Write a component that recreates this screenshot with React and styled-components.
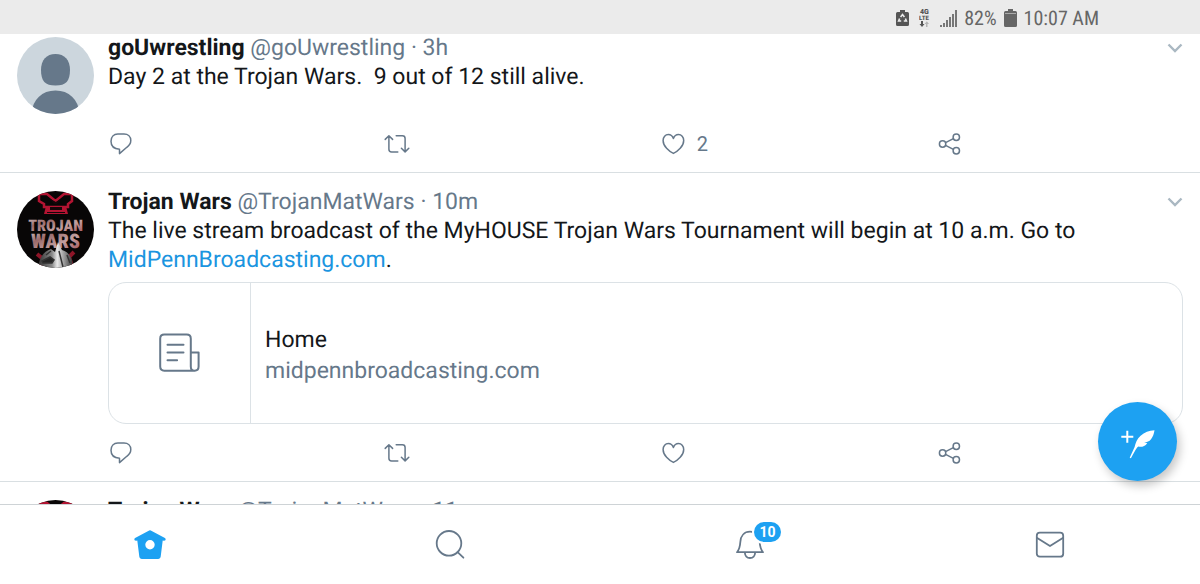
import React from "react";
import styled, { createGlobalStyle } from "styled-components";

const GlobalStyle = createGlobalStyle`
  * { box-sizing: border-box; }
  body { margin: 0; background: #fff; text-rendering: geometricPrecision; }
  button { font: inherit; color: inherit; background: none; border: 0; padding: 0; cursor: pointer; }
  svg { display: block; flex: none; }
`;

const slate = "#66788a";
const blue = "#1da1f2";

const Screen = styled.div`
  position: relative;
  display: flex;
  flex-direction: column;
  height: 100vh;
  overflow: hidden;
  font-family: Roboto, "Liberation Sans", sans-serif;
  color: #14171a;
`;

const StatusBar = styled.header`
  flex: none;
  display: flex;
  align-items: center;
  justify-content: flex-end;
  gap: 7px;
  height: 34px;
  padding: 2px 101px 0 17px;
  background: #ebebeb;
  color: #666;
  font-family: "Roboto Condensed", Roboto, sans-serif;
  font-size: 20px;
  line-height: 24px;
`;

const StatusIcons = styled.div`
  display: flex;
  align-items: center;
  gap: 10px;
`;

const Feed = styled.main`
  flex: 1;
  min-height: 0;
  overflow: hidden;
`;

const TweetBox = styled.article`
  display: flex;
  gap: 14px;
  padding: ${(p) => (p.$scrolled ? 0 : 15)}px 17px 0;
  border-bottom: 1px solid #d9dfe2;
`;

const Avatar = styled.div`
  flex: none;
  width: 77px;
  height: 77px;
  margin: 3px 0 1px;
  border-radius: 50%;
  overflow: hidden;
`;

const TweetMain = styled.div`
  flex: 1;
  min-width: 0;
`;

const Content = styled.div`
  min-height: 81px;
`;

const TweetHeader = styled.div`
  display: flex;
  justify-content: space-between;
  height: 28px;
  font-size: 23px;
  line-height: 27px;
  white-space: nowrap;
  color: ${slate};
`;

const MoreButton = styled.button`
  display: flex;
  align-items: center;
`;

const Name = styled.strong`
  color: #14171a;
  font-weight: 700;
`;

const Body = styled.p`
  margin: 0;
  font-size: 23px;
  line-height: 29px;
  white-space: pre-wrap;
`;

const Link = styled.a`
  color: #1b95e0;
  text-decoration: none;
`;

const Card = styled.a`
  display: flex;
  height: 142px;
  margin-top: 8px;
  border: 1px solid #dce2e6;
  border-radius: 18px;
  color: inherit;
  text-decoration: none;
`;

const CardThumb = styled.div`
  flex: none;
  display: flex;
  align-items: center;
  justify-content: center;
  width: 142px;
  border-right: 1px solid #dce2e6;
  color: ${slate};
`;

const CardText = styled.div`
  display: flex;
  flex-direction: column;
  justify-content: center;
  padding: 3px 14px 0;
  font-size: 23px;
  line-height: 31px;
`;

const CardDomain = styled.span`
  color: ${slate};
`;

const Actions = styled.div`
  display: grid;
  grid-template-columns: repeat(3, 9fr) 8fr;
  justify-items: start;
  align-items: center;
  height: 57px;
`;

const Action = styled.button`
  display: flex;
  align-items: center;
  gap: 10px;
  color: ${slate};
  font-size: 20px;
  line-height: 26px;
`;

const NavBar = styled.nav`
  flex: none;
  display: grid;
  grid-template-columns: repeat(4, 1fr);
  height: 80px;
  border-top: 1px solid #ced3d6;
  background: #fff;
`;

const NavButton = styled.button`
  display: flex;
  align-items: center;
  justify-content: center;
  color: ${slate};
`;

const BadgeAnchor = styled.span`
  position: relative;
`;

const Badge = styled.span`
  position: absolute;
  left: 20px;
  top: -7px;
  width: 27px;
  height: 20px;
  border-radius: 10px;
  background: ${blue};
  color: #fff;
  font-size: 14px;
  font-weight: 700;
  line-height: 20px;
  text-align: center;
  box-shadow: 0 0 0 2px #fff;
`;

const Compose = styled.button`
  position: absolute;
  right: 23px;
  bottom: 103px;
  display: flex;
  align-items: center;
  justify-content: center;
  width: 79px;
  height: 79px;
  border-radius: 50%;
  background: ${blue};
  color: #fff;
  box-shadow: 3px 5px 10px rgba(0, 0, 0, 0.22);
`;

const Line = ({ size = 26, width = 1.5, children }) => (
  <svg width={size} height={size} viewBox={`0 0 ${size} ${size}`} fill="none" stroke="currentColor" strokeWidth={width} strokeLinecap="round" strokeLinejoin="round" aria-hidden="true">
    {children}
  </svg>
);

const ReplyIcon = () => (
  <Line>
    <path d="M9.800 3h6.200c4 0 6.800 2.600 6.800 6.600 0 3-1.200 4.800-4 6.700l-7.300 6.300v-4.400C6 18 3 14.800 3 10.300 3 6 5.800 3 9.800 3z" />
  </Line>
);

const RetweetIcon = () => (
  <Line>
    <path d="M1.200 8.400 4.900 4.700l3.700 3.700M4.900 5v13.200c0 1.800.9 2.700 2.700 2.700h6.200M24.800 17.200l-3.700 3.700-3.700-3.700M21.100 20.600V7.400c0-1.800-.9-2.700-2.700-2.700h-6.200" />
  </Line>
);

const HeartIcon = () => (
  <Line>
    <path d="M12.400 22.400C8 20.400 2.100 15.200 2.100 9.400c0-3.300 2.300-5.800 5.200-5.800 2.400 0 4.200 1.400 5.100 4 .9-2.600 2.700-4 5.100-4 2.900 0 5.200 2.500 5.200 5.800 0 5.800-5.900 11-10.300 13z" />
  </Line>
);

const ShareIcon = () => (
  <Line>
    <circle cx="5.600" cy="13" r="3.200" />
    <circle cx="19.300" cy="6.200" r="3.200" />
    <circle cx="19.300" cy="19.800" r="3.200" />
    <path d="m8.500 11.600 7.900-4M8.500 14.400l7.900 4" />
  </Line>
);

const Chevron = () => (
  <svg width="16" height="12" viewBox="0 0 16 12" fill="none" stroke="#aab8c2" strokeWidth="2.400" aria-hidden="true">
    <path d="m1.500 2.500 6.500 6.500L14.500 2.500" />
  </svg>
);

const NewsIcon = () => (
  <Line size={42} width={2}>
    <path d="M36 38.700H5.300c-2.600 0-4.100-1.500-4.100-4.100V6.700c0-2.600 1.500-4.100 4.100-4.100h22.400c2.600 0 4.100 1.500 4.100 4.100v27.800c0 2.700 1.200 4.200 3.600 4.200s4.200-1.600 4.200-4.200V20.500h-7.800M8.500 12.800h16M8.500 20.500h16M8.500 28.200h9.600" />
  </Line>
);

const HomeIcon = () => (
  <svg width="32" height="32" viewBox="0 0 32 32" fill={blue} aria-hidden="true">
    <path fillRule="evenodd" d="M15.200 1.500q.8-.4 1.600 0l14.100 7.600q1 .6.700 1.800-.5 1.100-2.900.7l-2 16c-.2 1.500-1.200 2.300-2.600 2.300H7.900c-1.400 0-2.400-.8-2.600-2.300l-2-16q-2.400.4-2.900-.7-.3-1.200.7-1.800zM16 11a4.700 4.700 0 1 0 0 9.400 4.700 4.700 0 0 0 0-9.400z" />
  </svg>
);

const SearchIcon = () => (
  <Line size={32} width={1.8}>
    <circle cx="15" cy="14.300" r="12.300" />
    <path d="m23.600 23.100 5.800 5.600" />
  </Line>
);

const BellIcon = () => (
  <Line size={32} width={1.8}>
    <path d="M3 23.200c2.200-2.700 3-5.100 3.300-10C6.600 6.700 10.400 2.700 16 2.700s9.400 4 9.700 10.500c.3 4.900 1.100 7.300 3.300 10zM10.800 23.500c.3 3.400 2.200 5.500 5.200 5.500s4.900-2.100 5.200-5.500" />
  </Line>
);

const MailIcon = () => (
  <Line size={32} width={1.8}>
    <rect x="2.800" y="3.700" width="26.400" height="24" rx="3" />
    <path d="m3.200 9 12.800 8 12.800-8" />
  </Line>
);

const FeatherIcon = () => (
  <svg width="36" height="36" viewBox="0 0 36 36" fill="currentColor" aria-hidden="true">
    <path d="M1.300 12.800h12M7.300 6.800v12" stroke="currentColor" strokeWidth="2" />
    <path d="M34.500 6.300C29 6.700 24.500 8.200 20.600 11.700c-3.700 3.400-5 6.900-6 11.300l-4.900 10.800 1.200.5c1.400-2.600 2.400-4.900 3.900-7.100 1.200-1.900 2.100-3.700 3.600-4.600 3.300.8 6.300-.2 8.900-3.400l-3.100-.8c2.900-.1 5.100-.9 6.800-3.100 1.900-2.500 3-5.400 3.500-9z" />
  </svg>
);

const PowerSaveIcon = () => (
  <svg width="13" height="16" viewBox="0 0 13 16" fill="#555" aria-hidden="true">
    <path d="M4 0h5v2h2.500Q13 2 13 3.500v11q0 1.500-1.500 1.500h-10Q0 16 0 14.500v-11Q0 2 1.500 2H4z" />
    <path d="m4.600 7 1.900-2.400L8.400 7M3.600 8.500l-1 2.500h2.600M9.400 8.500l1 2.500H7.800" fill="none" stroke="#ebebeb" strokeWidth="1.600" />
  </svg>
);

const LteIcon = () => (
  <svg width="11" height="18" viewBox="0 0 11 18" fill="#555" aria-hidden="true">
    <g fontFamily="Roboto, sans-serif" fontWeight="900">
      <text x="1" y="5" fontSize="7">4G</text>
      <text x="0" y="11" fontSize="6">LTE</text>
    </g>
    <path d="M2 12h2v3h1.500L3 18 .5 15H2z" />
    <path d="M7 18h1.500v-3H10l-2.200-2.800L5.600 15H7z" fill="#b5b5b5" />
  </svg>
);

const SignalIcon = () => (
  <svg width="17" height="17" viewBox="0 0 17 17" fill="#777" aria-hidden="true">
    <path d="M0 15h2v2H0zM3 13h2v4H3zM6 10h2v7H6zM9 7h2v10H9zM12 4h2v13h-2zM15 0h2v17h-2z" />
  </svg>
);

const BatteryIcon = () => (
  <svg width="13" height="18" viewBox="0 0 13 18" aria-label="Battery">
    <path d="M4 0h5v2h2.500Q13 2 13 3.500v13q0 1.500-1.500 1.500h-10Q0 18 0 16.500v-13Q0 2 1.500 2H4z" fill="#666" />
    <path d="M1 4.500h11" stroke="#aaa" />
  </svg>
);

const DefaultPicture = () => (
  <svg width="77" height="77" viewBox="0 0 77 77" aria-hidden="true">
    <path d="M0 0h77v77H0z" fill="#ccd6dd" />
    <path d="M38.500 17c9 0 14.500 6 14.500 16 0 11-4 15.500-14.500 15.500S24 44 24 33c0-10 5.500-16 14.500-16z" fill="#66788a" />
    <path d="M14 77c2-15 11-23.500 24.500-23.500S61 62 63 77z" fill="#66788a" />
  </svg>
);

const TrojanPicture = () => (
  <svg width="77" height="77" viewBox="0 0 77 77" aria-label="Trojan Wars">
    <defs>
      <linearGradient id="stone" x1="0" y1="0" x2="1" y2="1">
        <stop offset="0" stopColor="#d8cccc" />
        <stop offset=".3" stopColor="#9a6a6b" />
        <stop offset=".6" stopColor="#c2a0a0" />
        <stop offset="1" stopColor="#a04a50" />
      </linearGradient>
      <linearGradient id="helmet" x1="0" y1="0" x2="1" y2="0">
        <stop offset="0" stopColor="#333" />
        <stop offset=".4" stopColor="#888" />
        <stop offset=".55" stopColor="#e8e8e8" />
        <stop offset=".75" stopColor="#999" />
        <stop offset="1" stopColor="#333" />
      </linearGradient>
    </defs>
    <path d="M0 0h77v77H0z" fill="#080606" />
    <path d="M22 3h8l8.500 7L47 3h8v7l-4 3v3H27v-3l-5-3z" fill="none" stroke="#b31432" strokeWidth="2.500" />
    <path d="M29 15h20l2 8H27z" fill="#b31432" />
    <path d="M33 16h12v3H33zM30 21h18v1H30zM33 8l4 5h3l4-5-5 3z" fill="#160609" />
    <path d="m20 63 6 5-3 8M57 61l-5 5 3 9" fill="none" stroke="#8e1528" strokeWidth="4" />
    <g fill="url(#stone)" fontFamily="'Roboto Condensed', Roboto, sans-serif" fontWeight="900" textAnchor="middle">
      <text x="38.500" y="40" fontSize="16">TROJAN</text>
      <text x="38.500" y="57" fontSize="20">WARS</text>
    </g>
    <path d="M21 77c1-10 5-16 13-19l4 3 3-10 4 8c8 2 11 10 11 18z" fill="url(#helmet)" />
    <path d="m25 70 8-4 4 3-2 3h-9zM42 60l4 16M34 60l-5 4M50 64l3 8" fill="#242424" stroke="#333" strokeWidth="1.500" />
  </svg>
);

function Tweet({ name, handle, time, picture, likes, scrolled, children }) {
  return (
    <TweetBox $scrolled={scrolled}>
      <Avatar>{picture}</Avatar>
      <TweetMain>
        <Content>
          <TweetHeader>
            <span><Name>{name}</Name> {handle} · {time}</span>
            <MoreButton aria-label="More options"><Chevron /></MoreButton>
          </TweetHeader>
          {children}
        </Content>
        <Actions>
          <Action aria-label="Reply"><ReplyIcon /></Action>
          <Action aria-label="Retweet"><RetweetIcon /></Action>
          <Action aria-label="Like"><HeartIcon />{likes}</Action>
          <Action aria-label="Share"><ShareIcon /></Action>
        </Actions>
      </TweetMain>
    </TweetBox>
  );
}

export default function App() {
  return (
    <Screen>
      <GlobalStyle />
      <StatusBar>
        <StatusIcons>
          <PowerSaveIcon />
          <LteIcon />
          <SignalIcon />
        </StatusIcons>
        <span>82%</span>
        <BatteryIcon />
        <span>10:07 AM</span>
      </StatusBar>
      <Feed>
        <Tweet scrolled name="goUwrestling" handle="@goUwrestling" time="3h" picture={<DefaultPicture />} likes={2}>
          <Body>{"Day 2 at the Trojan Wars.  9 out of 12 still alive."}</Body>
        </Tweet>
        <Tweet name="Trojan Wars" handle="@TrojanMatWars" time="10m" picture={<TrojanPicture />}>
          <Body>
            The live stream broadcast of the MyHOUSE Trojan Wars Tournament will begin at 10 a.m. Go to <Link href="#site">MidPennBroadcasting.com</Link>.
          </Body>
          <Card href="#home">
            <CardThumb><NewsIcon /></CardThumb>
            <CardText>
              <span>Home</span>
              <CardDomain>midpennbroadcasting.com</CardDomain>
            </CardText>
          </Card>
        </Tweet>
        <Tweet name="Trojan Wars" handle="@TrojanMatWars" time="11m" picture={<TrojanPicture />} />
      </Feed>
      <NavBar>
        <NavButton aria-label="Home"><HomeIcon /></NavButton>
        <NavButton aria-label="Search"><SearchIcon /></NavButton>
        <NavButton aria-label="Notifications">
          <BadgeAnchor><BellIcon /><Badge>10</Badge></BadgeAnchor>
        </NavButton>
        <NavButton aria-label="Messages"><MailIcon /></NavButton>
      </NavBar>
      <Compose aria-label="New tweet"><FeatherIcon /></Compose>
    </Screen>
  );
}
